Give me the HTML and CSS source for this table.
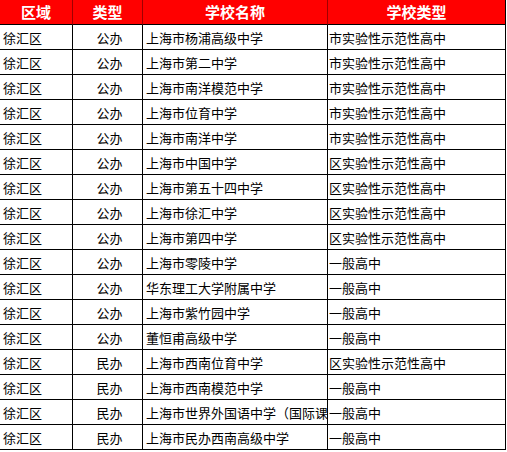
FILE: index.html
```html
<!DOCTYPE html>
<html lang="zh-CN">
<head>
<meta charset="utf-8">
<title>徐汇区高中</title>
<link rel="stylesheet" href="styles.css">
</head>
<body>
<div class="sheet">
  <div class="hd">区域</div><div class="hd">类型</div><div class="hd">学校名称</div><div class="hd">学校类型</div>
  <div class="c l">徐汇区</div><div class="c m">公办</div><div class="c l n">上海市杨浦高级中学</div><div class="c l t">市实验性示范性高中</div>
  <div class="c l">徐汇区</div><div class="c m">公办</div><div class="c l n">上海市第二中学</div><div class="c l t">市实验性示范性高中</div>
  <div class="c l">徐汇区</div><div class="c m">公办</div><div class="c l n">上海市南洋模范中学</div><div class="c l t">市实验性示范性高中</div>
  <div class="c l">徐汇区</div><div class="c m">公办</div><div class="c l n">上海市位育中学</div><div class="c l t">市实验性示范性高中</div>
  <div class="c l">徐汇区</div><div class="c m">公办</div><div class="c l n">上海市南洋中学</div><div class="c l t">市实验性示范性高中</div>
  <div class="c l">徐汇区</div><div class="c m">公办</div><div class="c l n">上海市中国中学</div><div class="c l t">区实验性示范性高中</div>
  <div class="c l">徐汇区</div><div class="c m">公办</div><div class="c l n">上海市第五十四中学</div><div class="c l t">区实验性示范性高中</div>
  <div class="c l">徐汇区</div><div class="c m">公办</div><div class="c l n">上海市徐汇中学</div><div class="c l t">区实验性示范性高中</div>
  <div class="c l">徐汇区</div><div class="c m">公办</div><div class="c l n">上海市第四中学</div><div class="c l t">区实验性示范性高中</div>
  <div class="c l">徐汇区</div><div class="c m">公办</div><div class="c l n">上海市零陵中学</div><div class="c l t">一般高中</div>
  <div class="c l">徐汇区</div><div class="c m">公办</div><div class="c l n">华东理工大学附属中学</div><div class="c l t">一般高中</div>
  <div class="c l">徐汇区</div><div class="c m">公办</div><div class="c l n">上海市紫竹园中学</div><div class="c l t">一般高中</div>
  <div class="c l">徐汇区</div><div class="c m">公办</div><div class="c l n">董恒甫高级中学</div><div class="c l t">一般高中</div>
  <div class="c l">徐汇区</div><div class="c m">民办</div><div class="c l n">上海市西南位育中学</div><div class="c l t">区实验性示范性高中</div>
  <div class="c l">徐汇区</div><div class="c m">民办</div><div class="c l n">上海市西南模范中学</div><div class="c l t">一般高中</div>
  <div class="c l">徐汇区</div><div class="c m">民办</div><div class="c l n">上海市世界外国语中学（国际课程班）</div><div class="c l t">一般高中</div>
  <div class="c l">徐汇区</div><div class="c m">民办</div><div class="c l n">上海市民办西南高级中学</div><div class="c l t">一般高中</div>
</div>
</body>
</html>
```
FILE: styles.css
```css
html, body {
  margin: 0;
  padding: 0;
  background: #ffffff;
}
.sheet {
  display: grid;
  grid-template-columns: 73px 70px 185px 178px;
  grid-auto-rows: 25px;
  width: 506px;
  font-family: "Noto Sans CJK SC", "Noto Sans", sans-serif;
  color: #000000;
}
.hd {
  background: #ff0000;
  color: #ffffff;
  font-weight: bold;
  font-size: 15px;
  line-height: 24px;
  text-align: center;
  border-right: 1px solid #a00000;
  border-bottom: 1px solid #000000;
  white-space: nowrap;
  overflow: hidden;
}
.hd:last-child, .sheet > .hd:nth-child(4) {
  border-right-color: #000000;
}
.c {
  font-size: 13px;
  line-height: 25px;
  height: 24px;
  border-right: 1px solid #000000;
  border-bottom: 1px solid #000000;
  white-space: nowrap;
  overflow: hidden;
}
.l {
  padding-left: 3px;
}
.m {
  text-align: center;
  padding-left: 4px;
}
.n {
  padding-left: 3px;
}
.t {
  padding-left: 1px;
}
```
